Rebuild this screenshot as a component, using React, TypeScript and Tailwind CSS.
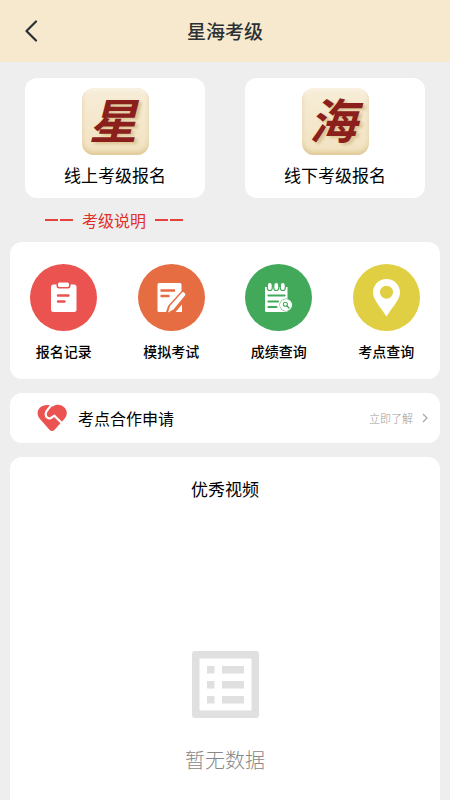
import type { ReactNode } from 'react';

interface EntryCardProps {
  mark: string;
  label: string;
}

function EntryCard({ mark, label }: EntryCardProps) {
  return (
    <button
      type="button"
      className="flex h-[120px] flex-1 cursor-pointer flex-col items-center rounded-xl bg-white pt-[10px]"
    >
      <span
        aria-hidden="true"
        className="flex h-[67px] w-[67px] items-center justify-center rounded-xl bg-linear-to-b from-[#f7edd8] to-[#f1e2c0] pr-1 pb-2 text-5xl font-bold text-[#8b1f1c] italic shadow-[inset_0_-3px_4px_#e0c996,inset_0_2px_3px_#fbf5e8] text-shadow-[3px_2px_3px_#dcc493]"
      >
        {mark}
      </span>
      <span className="mt-2 text-[17px] leading-6 text-black">{label}</span>
    </button>
  );
}

function Dashes() {
  return (
    <span aria-hidden="true" className="flex gap-[2px]">
      <span className="h-[2px] w-[13px] bg-[#e5403a]" />
      <span className="h-[2px] w-[13px] bg-[#e5403a]" />
    </span>
  );
}

function RecordIcon() {
  return (
    <svg viewBox="0 0 67 67" className="h-[67px] w-[67px]" aria-hidden="true">
      <path
        d="M23.5 20.5h3v1.500a2.500 2.500 0 0 0 2.500 2.500h9a2.500 2.500 0 0 0 2.500-2.500v-1.500h3.500a2.500 2.500 0 0 1 2.500 2.500v22.500a2.500 2.500 0 0 1-2.500 2.500H23.500a2.500 2.500 0 0 1-2.500-2.500V23a2.500 2.500 0 0 1 2.500-2.500z"
        fill="#fff"
      />
      <rect x="28" y="18.500" width="11" height="4.500" rx="1.500" fill="#fff" />
      <path d="M28 31.500h10.500M28 37.500h6.500" stroke="#eb5350" strokeWidth="2.400" strokeLinecap="round" />
    </svg>
  );
}

function ExamIcon() {
  return (
    <svg viewBox="0 0 67 67" className="h-[67px] w-[67px]" aria-hidden="true">
      <path d="M21 19h21a1.500 1.500 0 0 1 1.500 1.500V27L30 42l-2 6h-7a1.500 1.500 0 0 1-1.500-1.500v-26A1.500 1.500 0 0 1 21 19z" fill="#fff" />
      <path d="M22.500 26.500h14.500M22.500 32h9" stroke="#e66c41" strokeWidth="2.400" />
      <path d="M44 28.500a1.500 1.500 0 0 1 2 0l1 1a1.500 1.500 0 0 1 0 2L35.500 45.500l-5.500 3 2-6.500z" fill="#fff" />
      <path d="M44 40.500v7.500h-6.500z" fill="#fff" />
    </svg>
  );
}

function ScoreIcon() {
  return (
    <svg viewBox="0 0 67 67" className="h-[67px] w-[67px]" aria-hidden="true">
      <path d="M20 23h22.500v25H21.500a1.500 1.500 0 0 1-1.500-1.500z" fill="#fff" />
      <g fill="#fff" stroke="#42a95b" strokeWidth="1.200">
        <rect x="22.300" y="18.500" width="5" height="8" rx="2.500" />
        <rect x="28.800" y="18.500" width="5" height="8" rx="2.500" />
        <rect x="35.300" y="18.500" width="5" height="8" rx="2.500" />
      </g>
      <path d="M23.500 31.500h16M23.500 37.500h9.500M23.500 43h8" stroke="#42a95b" strokeWidth="2.200" strokeLinecap="round" />
      <circle cx="41" cy="41" r="6.500" fill="#42a95b" />
      <circle cx="41" cy="41" r="5.500" fill="#42a95b" stroke="#fff" strokeWidth="1.200" />
      <circle cx="41" cy="41" r="5.200" fill="#fff" />
      <circle cx="40.400" cy="40.300" r="2" fill="none" stroke="#42a95b" strokeWidth="1.100" />
      <path d="M42 42l2 2" stroke="#42a95b" strokeWidth="1.400" strokeLinecap="round" />
    </svg>
  );
}

function PlaceIcon() {
  return (
    <svg viewBox="0 0 67 67" className="h-[67px] w-[67px]" aria-hidden="true">
      <path
        d="M33.500 15c-7.700 0-13.500 6-13.500 13.300 0 7.200 6 12.700 13.500 24.200C41 41 47 35.500 47 28.300 47 21 41.200 15 33.500 15zm0 6.700a6.500 6.500 0 1 1 0 13 6.500 6.500 0 0 1 0-13z"
        fill="#fff"
        fillRule="evenodd"
      />
    </svg>
  );
}

function HeartIcon() {
  return (
    <svg viewBox="0 0 32 28" className="h-7 w-8" aria-hidden="true">
      <path
        d="M3.800 3.800C6.500 1 10.500.6 13.500 1.200L16 2.700l3-1.500C22.500.3 26.200 1 28.700 3.800c2.800 3 2.800 7.600 0 10.600L18.600 25.700c-1.500 1.700-3.700 1.700-5.200 0L3.600 14.400C.9 11.400 1 6.800 3.800 3.800z"
        fill="#eb5350"
      />
      <path
        d="M15.300.5C14 4.500 9.800 6 9.600 10c0 3.200 3 5.300 5.300 4l3.500-2.300 7.800 7.800"
        fill="none"
        stroke="#fff"
        strokeWidth="2.200"
        strokeLinejoin="round"
      />
    </svg>
  );
}

function EmptyIcon() {
  return (
    <svg viewBox="0 0 67 67" className="h-[67px] w-[67px]" fill="#e0e0e0" aria-hidden="true">
      <path d="M3 0h61a3 3 0 0 1 3 3v61a3 3 0 0 1-3 3H3a3 3 0 0 1-3-3V3a3 3 0 0 1 3-3zm4.500 7.500v52h52v-52z" fillRule="evenodd" />
      <path d="M15 15h7.500v7.500H15zM30 15h22v7.500H30zM15 30h7.500v7.500H15zM30 30h22v7.500H30zM15 45h7.500v7.500H15zM30 45h22v7.500H30z" />
    </svg>
  );
}

interface MenuItemProps {
  label: string;
  color: string;
  icon: ReactNode;
}

function MenuItem({ label, color, icon }: MenuItemProps) {
  return (
    <button type="button" className="flex cursor-pointer flex-col items-center">
      <span className={`h-[67px] w-[67px] rounded-full ${color}`}>{icon}</span>
      <span className="mt-[10px] text-sm leading-5 font-medium text-black">{label}</span>
    </button>
  );
}

const menu: MenuItemProps[] = [
  { label: '报名记录', color: 'bg-[#eb5350]', icon: <RecordIcon /> },
  { label: '模拟考试', color: 'bg-[#e66c41]', icon: <ExamIcon /> },
  { label: '成绩查询', color: 'bg-[#42a95b]', icon: <ScoreIcon /> },
  { label: '考点查询', color: 'bg-[#e1cf43]', icon: <PlaceIcon /> },
];

export default function App() {
  return (
    <div className="flex min-h-screen flex-col bg-[#eeeeee] font-['Noto_Sans_CJK_SC',sans-serif]">
      <header className="grid h-[62px] grid-cols-[1fr_auto_1fr] items-center bg-[#f6e9cd] text-[#2b3034]">
        <button type="button" aria-label="返回" className="ml-6 w-fit cursor-pointer">
          <svg viewBox="0 0 14 22" className="h-[22px] w-[14px]" fill="none" stroke="currentColor" strokeWidth="2.200" strokeLinecap="round" strokeLinejoin="round">
            <path d="M12 1.500L2.500 11l9.500 9.500" />
          </svg>
        </button>
        <h1 className="text-[19px] font-medium">星海考级</h1>
      </header>

      <main className="flex flex-1 flex-col">
        <section className="flex gap-10 px-[25px] pt-4">
          <EntryCard mark="星" label="线上考级报名" />
          <EntryCard mark="海" label="线下考级报名" />
        </section>

        <a href="#about" className="ml-[45px] flex h-11 w-fit items-center gap-[9px] pb-px text-base text-[#e0302a]">
          <Dashes />
          考级说明
          <Dashes />
        </a>

        <section className="mx-[10px] grid h-[137px] grid-cols-4 rounded-xl bg-white pt-[22px]">
          {menu.map((item) => (
            <MenuItem key={item.label} {...item} />
          ))}
        </section>

        <a href="#apply" className="mx-[10px] mt-[14px] flex h-[50px] items-center rounded-xl bg-white pr-3 pl-[26px]">
          <HeartIcon />
          <span className="ml-[10px] flex-1 text-base text-black">考点合作申请</span>
          <span className="text-[11px] font-light text-[#999999]">立即了解</span>
          <svg viewBox="0 0 6 10" className="ml-[9px] h-[10px] w-[6px]" fill="none" stroke="#aaaaaa" strokeWidth="1.300" aria-hidden="true">
            <path d="M1 1l4 4-4 4" />
          </svg>
        </a>

        <section className="mx-[10px] mt-[14px] flex flex-1 flex-col items-center rounded-t-xl bg-white pt-5 pb-6">
          <h2 className="text-[17px] leading-6 text-black">优秀视频</h2>
          <div className="mt-[150px] flex flex-col items-center">
            <EmptyIcon />
            <p className="mt-7 text-xl font-light text-[#888888]">暂无数据</p>
          </div>
        </section>
      </main>
    </div>
  );
}
